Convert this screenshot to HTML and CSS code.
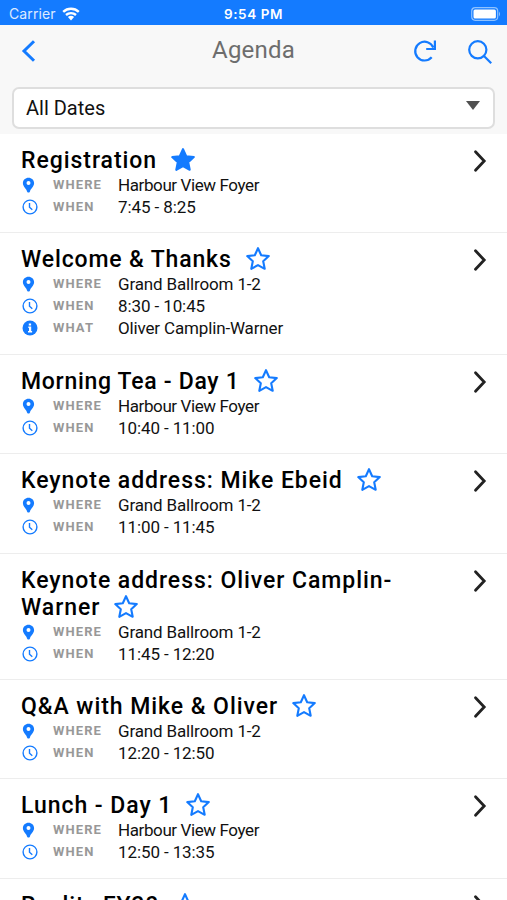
FILE: index.html
```
<!DOCTYPE html>
<html lang="en">
<head>
<meta charset="utf-8">
<title>Agenda</title>
<link rel="stylesheet" href="styles.css">
</head>
<body>
<svg class="defs" aria-hidden="true">
  <symbol id="star" viewBox="0 0 26 26"><path d="M13 2.200l3.200 7 7.600.9-5.600 5.200 1.500 7.500-6.700-3.700-6.700 3.700 1.500-7.500L2.200 10.100l7.600-.9z"/></symbol>
  <symbol id="pin" viewBox="0 0 12 16"><path fill="currentColor" fill-rule="evenodd" d="M6 .8C2.900.8.4 3.100.4 6.200.4 9.500 4.200 12 4.500 14.400Q6 16.800 7.500 14.400C7.800 12 11.600 9.500 11.600 6.200 11.600 3.100 9.100.8 6 .8zM6 4a2 2 0 1 1 0 4 2 2 0 0 1 0-4z"/></symbol>
  <symbol id="clock" viewBox="0 0 16 16"><circle cx="8" cy="8" r="6.900"/><path d="M7.500 4v4.300L10.300 10.800"/></symbol>
  <symbol id="info" viewBox="0 0 16 16"><circle cx="8" cy="8" r="7.500" fill="currentColor"/><path fill="#fff" d="M6.800 3.500h2.300v2H6.800zM6.300 6.600h2.900v4.500h.9v1.300H6v-1.300h1V7.900h-.7z"/></symbol>
  <symbol id="next" viewBox="0 0 14 24"><path d="M2.500 2.800L11.200 12l-8.700 9.200"/></symbol>
</svg>
<header class="status">
  <span class="carrier">Carrier</span>
  <svg class="wifi" viewBox="0 0 18 14"><path d="M1.200 4.800a11.500 11.500 0 0 1 15.600 0M4 8a7.500 7.500 0 0 1 10 0"/><path class="dot" d="M9 13.400L5.900 10.100a4.500 4.500 0 0 1 6.200 0z"/></svg>
  <span class="time">9:54 PM</span>
  <svg class="battery" viewBox="0 0 30 14"><rect class="shell" x=".7" y=".7" width="26" height="12.600" rx="3.500"/><rect class="charge" x="2.500" y="2.500" width="22.400" height="9" rx="1.500"/><path class="cap" d="M28 4.500q2 2.500 0 5z"/></svg>
</header>
<nav class="bar">
  <svg class="back" viewBox="0 0 16 24"><path d="M13 2.200L3 12l10 9.800"/></svg>
  <h1>Agenda</h1>
  <svg class="reload" viewBox="0 0 24 24"><path d="M18.700 18.300A9.400 9.400 0 1 1 20.300 8.500M21.900 1.500v8.500h-8.700"/></svg>
  <svg class="search" viewBox="0 0 26 26"><circle cx="10.800" cy="10.800" r="8.600"/><path d="M17 17l7.200 7.300"/></svg>
</nav>
<div class="filter"><div class="select"><span>All Dates</span><i class="caret"></i></div></div>
<main id="list"></main>
<script src="agenda.js"></script>
</body>
</html>
```
FILE: styles.css
```
* { box-sizing: border-box; }
body { margin: 0; height: 900px; overflow: hidden; background: #fff; color: #111; font-family: Roboto, "Liberation Sans", sans-serif; }
svg { display: block; fill: none; flex: none; }
.defs { position: absolute; width: 0; height: 0; }
.status { height: 25px; background: #147bff; color: #fff; display: grid; grid-template-columns: auto auto 1fr auto; align-items: center; padding: 2px 6px 0 9px; font: 14px/18px Inter, sans-serif; position: relative; }
.carrier { letter-spacing: .1px; opacity: .85; }
.wifi { width: 18px; height: 14px; margin-left: 6px; stroke: #fff; stroke-width: 2.4; }
.wifi .dot { fill: #fff; stroke: none; }
.time { position: absolute; left: 0; right: 0; top: 5px; text-align: center; font-weight: 600; font-size: 13.5px; letter-spacing: .6px; }
.battery { width: 30px; height: 14px; grid-column: 4; }
.shell { stroke: #8fc2ff; stroke-width: 1.2; }
.charge { fill: #fff; }
.cap { fill: #8fc2ff; }
.bar { height: 55px; background: #f8f8f8; display: flex; align-items: flex-start; padding: 14px 14px 0 21px; color: #147bff; }
.bar svg { stroke: currentColor; stroke-width: 2.2; }
.bar .back { width: 16px; height: 24px; stroke-width: 3; }
.bar h1 { margin: -4px 0 0; flex: 1; padding-left: 57px; text-align: center; font-weight: 400; font-size: 24px; line-height: 30px; letter-spacing: .2px; color: #6d6d6d; }
.bar .reload { width: 24px; height: 24px; }
.bar .search { width: 26px; height: 26px; margin-left: 30px; }
.filter { height: 54px; background: #f8f8f8; padding: 7px 12px 5px; }
.select { height: 42px; border: 2px solid #dedede; border-radius: 7px; background: #fff; display: flex; align-items: center; justify-content: space-between; padding: 0 13px 0 12px; font-size: 20px; }
.caret { border: solid transparent; border-width: 9px 7.5px 0; border-top-color: #505050; margin-top: -6px; }
.item { display: flex; justify-content: space-between; padding: 13px 20px 14.4px 21px; border-bottom: 1px solid #ededed; }
.info { width: 400px; }
.item h2 { margin: 0; font-weight: 500; font-size: 23px; line-height: 27px; letter-spacing: .95px; color: #000; }
.welcome h2 { letter-spacing: .85px; }
.tea h2 { letter-spacing: .7px; }
.reality h2 { letter-spacing: .8px; }
.star { display: inline-block; width: 26px; height: 26px; margin: -5px 0 -4px 13px; vertical-align: -4px; position: relative; top: -3px; color: #147bff; stroke: currentColor; stroke-width: 2.1; stroke-linejoin: round; }
.star.on { fill: currentColor; }
.row { display: grid; grid-template-columns: 32px 65px 1fr; align-items: center; height: 22px; line-height: 22px; }
.row b { font-weight: 700; font-size: 13px; letter-spacing: 1.1px; color: #989898; }
.row span { font-size: 17px; letter-spacing: -.15px; white-space: nowrap; }
.row .foyer { letter-spacing: -.4px; }
.when span { letter-spacing: -.1px; }
.row svg { color: #147bff; width: 16px; height: 16px; margin-left: 1px; }
.row .pin { width: 13px; }
.row .clock { stroke: currentColor; stroke-width: 1.4; }
.next { width: 14px; height: 24px; margin-top: 2px; stroke: #222; stroke-width: 2.8; stroke-linecap: round; }
```
FILE: agenda.js
```
const foyer = "Harbour View Foyer";
const ballroom = "Grand Ballroom 1-2";
const sessions = [
  ["registration", "Registration", foyer, "7:45 - 8:25"],
  ["welcome", "Welcome & Thanks", ballroom, "8:30 - 10:45", "Oliver Camplin-Warner"],
  ["tea", "Morning Tea - Day 1", foyer, "10:40 - 11:00"],
  ["mike", "Keynote address: Mike Ebeid", ballroom, "11:00 - 11:45"],
  ["oliver", "Keynote address: Oliver Camplin-Warner", ballroom, "11:45 - 12:20"],
  ["qa", "Q&A with Mike & Oliver", ballroom, "12:20 - 12:50"],
  ["lunch", "Lunch - Day 1", foyer, "12:50 - 13:35"],
  ["reality", "Reality FY20"]
];
const esc = s => s.replace(/&/g, "&amp;");
const icon = (id, cls = id) => `<svg class="${cls}"><use href="#${id}"/></svg>`;
const row = (id, label, text) => text
  ? `<div class="row ${label.toLowerCase()}">${icon(id)}<b>${label}</b><span class="${text === foyer ? "foyer" : "text"}">${text}</span></div>`
  : "";
document.getElementById("list").innerHTML = sessions.map(([key, title, where, when, what], i) =>
  `<section class="item ${key}"><div class="info"><h2>${esc(title)}${icon("star", i ? "star" : "star on")}</h2>` +
  row("pin", "WHERE", where) + row("clock", "WHEN", when) + row("info", "WHAT", what) +
  `</div>${icon("next")}</section>`).join("");
```
